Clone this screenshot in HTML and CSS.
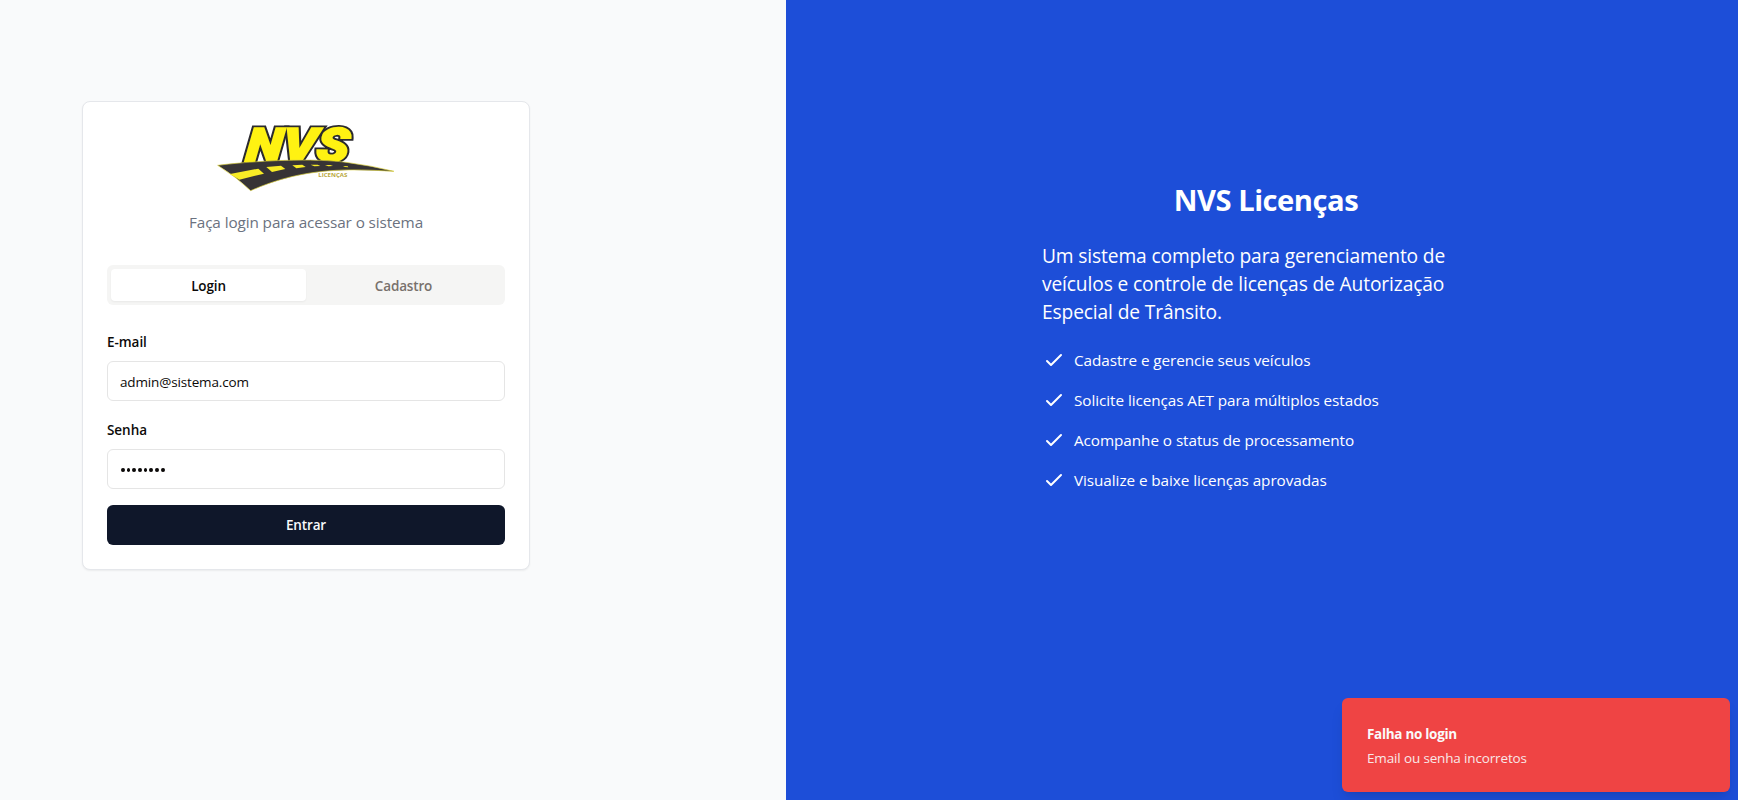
FILE: index.html
```html
<!DOCTYPE html>
<html lang="pt-BR">
<head>
<meta charset="utf-8">
<title>NVS Licenças</title>
<link rel="stylesheet" href="styles.css">
</head>
<body>
<main class="page">
  <section class="form-side">
    <div class="card">
      <header class="card-header">
        <svg class="logo" viewBox="3 0 600 255" role="img" aria-label="NVS Licenças">
          <g transform="translate(121 139) skewX(-5)">
            <text class="logo-word logo-outline" x="0" y="0" textLength="308" lengthAdjust="spacingAndGlyphs">NVS</text>
            <text class="logo-word logo-fill" x="0" y="0" textLength="308" lengthAdjust="spacingAndGlyphs" aria-hidden="true">NVS</text>
          </g>
          <path class="road" d="M38 151C150 137 330 128 430 143Q500 152 567 169C440 162 300 154 137 227Q92 184 38 151Z"/>
          <g class="lane">
            <path d="M75 177L160 161L177 176L103 194Z"/>
            <path d="M184 156L228 152L241 162L201 171Z"/>
            <path d="M262 151L292 149L302 156L274 160Z"/>
            <path d="M317 149L338 149L346 153L328 154Z"/>
            <path d="M360 150L376 150L384 153L370 154Z"/>
            <path d="M414 153L428 154L430 157L420 156Z"/>
          </g>
          <text class="logo-sub" x="340" y="186" textLength="87" lengthAdjust="spacingAndGlyphs">LICENÇAS</text>
        </svg>
        <p class="subtitle">Faça login para acessar o sistema</p>
      </header>
      <div class="tabs">
        <button class="tab tab-active">Login</button>
        <button class="tab">Cadastro</button>
      </div>
      <form class="form">
        <div class="field">
          <label class="label">E-mail</label>
          <div class="input">admin@sistema.com</div>
        </div>
        <div class="field">
          <label class="label">Senha</label>
          <div class="input"><span class="dots"><i></i><i></i><i></i><i></i><i></i><i></i><i></i><i></i></span></div>
        </div>
        <button class="submit" type="button">Entrar</button>
      </form>
    </div>
  </section>
  <section class="info-side">
    <div class="info">
      <h1 class="title">NVS Licenças</h1>
      <p class="lead">Um sistema completo para gerenciamento de<br>veículos e controle de licenças de Autorização<br>Especial de Trânsito.</p>
      <ul class="features">
        <li><svg class="check" viewBox="0 0 24 24"><path d="M5 13l4 4L19 7"/></svg><span>Cadastre e gerencie seus veículos</span></li>
        <li><svg class="check" viewBox="0 0 24 24"><path d="M5 13l4 4L19 7"/></svg><span>Solicite licenças AET para múltiplos estados</span></li>
        <li><svg class="check" viewBox="0 0 24 24"><path d="M5 13l4 4L19 7"/></svg><span>Acompanhe o status de processamento</span></li>
        <li><svg class="check" viewBox="0 0 24 24"><path d="M5 13l4 4L19 7"/></svg><span>Visualize e baixe licenças aprovadas</span></li>
      </ul>
    </div>
  </section>
</main>
<div class="toast">
  <div class="toast-title">Falha no login</div>
  <div class="toast-text">Email ou senha incorretos</div>
</div>
</body>
</html>
```
FILE: styles.css
```css
* { box-sizing: border-box; margin: 0; padding: 0; }
body { font-family: "Segoe UI", "Open Sans", "Noto Sans", sans-serif; color: #0c0a09; font-size: 13.5px; line-height: 20px; overflow: hidden; }
button { font: inherit; border: 0; background: none; color: inherit; }
.page { display: grid; grid-template-columns: 786px 1fr; height: 800px; }
.form-side { background: #f9fafb; padding: 101px 0 0 82px; }
.card { width: 448px; height: 469px; background: #fff; border: 1px solid #e5e7eb; border-radius: 8px; box-shadow: 0 1px 2px rgba(0,0,0,.06); padding: 13px 24px 24px; }
.card-header { display: flex; flex-direction: column; align-items: center; }
.logo { width: 200px; height: 85px; display: block; }
.logo-word { font-family: Roboto, sans-serif; font-weight: 900; font-style: italic; font-size: 138px; }
.logo-outline { fill: #2b2a2e; stroke: #2b2a2e; stroke-width: 17px; }
.logo-fill { fill: #fff212; stroke: #fff212; stroke-width: 6px; }
.logo-sub { font-family: "Open Sans", sans-serif; font-weight: 700; font-size: 17px; fill: #b9a83c; }
.road { fill: #373435; stroke: #d9cf3a; stroke-width: 2px; }
.lane { fill: #f8ec26; }
.subtitle { margin-top: 10px; font-size: 15.3px; line-height: 24px; color: #6b7280; white-space: nowrap; letter-spacing: -.1px; }
.tabs { display: grid; grid-template-columns: 1fr 1fr; height: 40px; margin-top: 31px; padding: 4px; border-radius: 6px; background: #f5f5f4; }
.tab { padding-top: 1px; border-radius: 4px; font-weight: 600; color: #78716c; letter-spacing: -.15px; }
.tab-active { background: #fff; color: #0c0a09; box-shadow: 0 1px 2px rgba(0,0,0,.05); }
.form { margin-top: 27px; }
.field { margin-bottom: 16px; }
.field + .field { margin-top: 19px; }
.label { display: block; height: 20px; margin-bottom: 9px; font-weight: 600; letter-spacing: -.05px; }
.input { display: flex; align-items: center; height: 40px; border: 1px solid #e5e5e5; border-radius: 6px; padding: 2px 12px 0; letter-spacing: -.15px; }
.dots { display: flex; gap: 2px; padding-left: 1px; }
.dots i { width: 3.7px; height: 4px; border-radius: 50%; background: #0c0a09; }
.submit { display: block; width: 100%; height: 40px; border-radius: 6px; background: #0f172a; color: #f8fafc; font-weight: 600; letter-spacing: -.15px; }
.info-side { background: #1d4ed8; color: #fff; padding: 182px 0 0 256px; }
.info { width: 448px; white-space: nowrap; }
.title { font-size: 29.2px; line-height: 36px; font-weight: 700; text-align: center; letter-spacing: -.5px; }
.lead { margin-top: 24px; font-size: 19.2px; line-height: 28px; letter-spacing: -.13px; }
.features { list-style: none; margin-top: 22px; display: grid; gap: 16px; font-size: 15.3px; line-height: 24px; letter-spacing: -.07px; }
.features li { display: flex; gap: 8px; }
.check { width: 24px; height: 24px; fill: none; stroke: #fff; stroke-width: 2; stroke-linecap: round; stroke-linejoin: round; }
.toast { position: absolute; right: 8px; bottom: 8px; width: 388px; height: 94px; padding: 26px 25px; border-radius: 6px; background: #ef4444; color: #fafafa; box-shadow: 0 10px 15px -3px rgba(0,0,0,.1), 0 4px 6px -4px rgba(0,0,0,.1); }
.toast-title { font-weight: 700; letter-spacing: -.3px; }
.toast-text { margin-top: 4px; opacity: .9; letter-spacing: -.15px; }
```
